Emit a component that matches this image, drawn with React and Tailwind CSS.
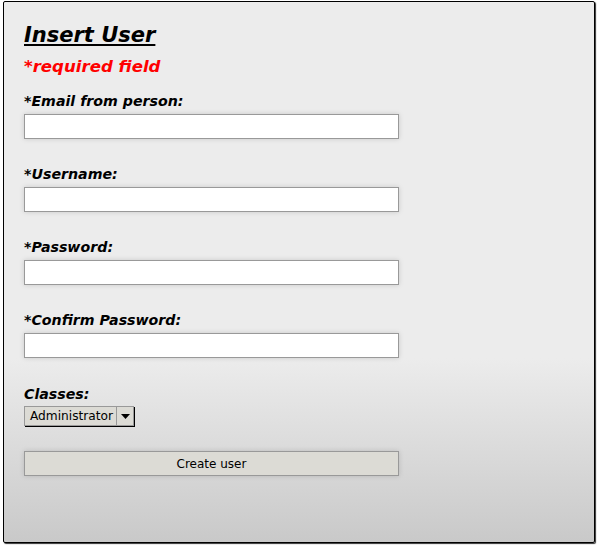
export default function App() {
  const fields = ['*Email from person:', '*Username:', '*Password:', '*Confirm Password:'];

  return (
    <div className="w-[599px] h-[548px] bg-white pt-[1px] pl-[3px] font-['DejaVu_Sans',sans-serif]">
      <div className="w-[592px] h-[542px] border border-black rounded-[2px] shadow-[1px_1px_1px_rgba(0,0,0,0.8)] bg-[linear-gradient(to_bottom,#ececec_0%,#ececec_66%,#c9c9c9_100%)] px-5 pt-[20px]">
        {/* Title */}
        <h1 className="text-[21px] leading-[26px] font-bold italic underline text-black">Insert User</h1>
        <p className="mt-[9px] text-[16.6px] leading-[20px] font-bold italic text-[#ff0000]">*required field</p>

        {/* Fields */}
        <div className="mt-[16px] flex flex-col gap-[27px]">
          {fields.map((label) => (
            <div key={label}>
              <label className="block text-[14.2px] leading-[17px] font-bold italic text-black mb-[4px]">{label}</label>
              <input
                type={label.includes('Password') ? 'password' : 'text'}
                className="block w-[375px] h-[25px] bg-white border border-[#999] shadow-[0_0_5px_rgba(0,0,0,0.15)] outline-none"
              />
            </div>
          ))}
        </div>

        {/* Classes */}
        <div className="mt-[28px]">
          <label className="block text-[14.2px] leading-[17px] font-bold italic text-black mb-[3px]">Classes:</label>
          <div className="flex items-stretch h-[20px] w-[110px] bg-[#dcdbd5] border border-[#999] shadow-[1px_1px_0_#000]">
            <span className="flex-1 pl-[5px] text-[12.2px] leading-[18px] text-black whitespace-nowrap">Administrator</span>
            <span className="w-[17px] border-l border-[#999] flex items-center justify-center">
              <svg width="9" height="5" viewBox="0 0 9 5"><path d="M0 0h9L4.5 5z" fill="#000" /></svg>
            </span>
          </div>
        </div>

        {/* Submit */}
        <button className="mt-[25px] block w-[375px] h-[25px] bg-[#dcdbd5] border border-[#999] shadow-[0_0_5px_rgba(0,0,0,0.15)] text-[12px] text-black">
          Create user
        </button>
      </div>
    </div>
  );
}
